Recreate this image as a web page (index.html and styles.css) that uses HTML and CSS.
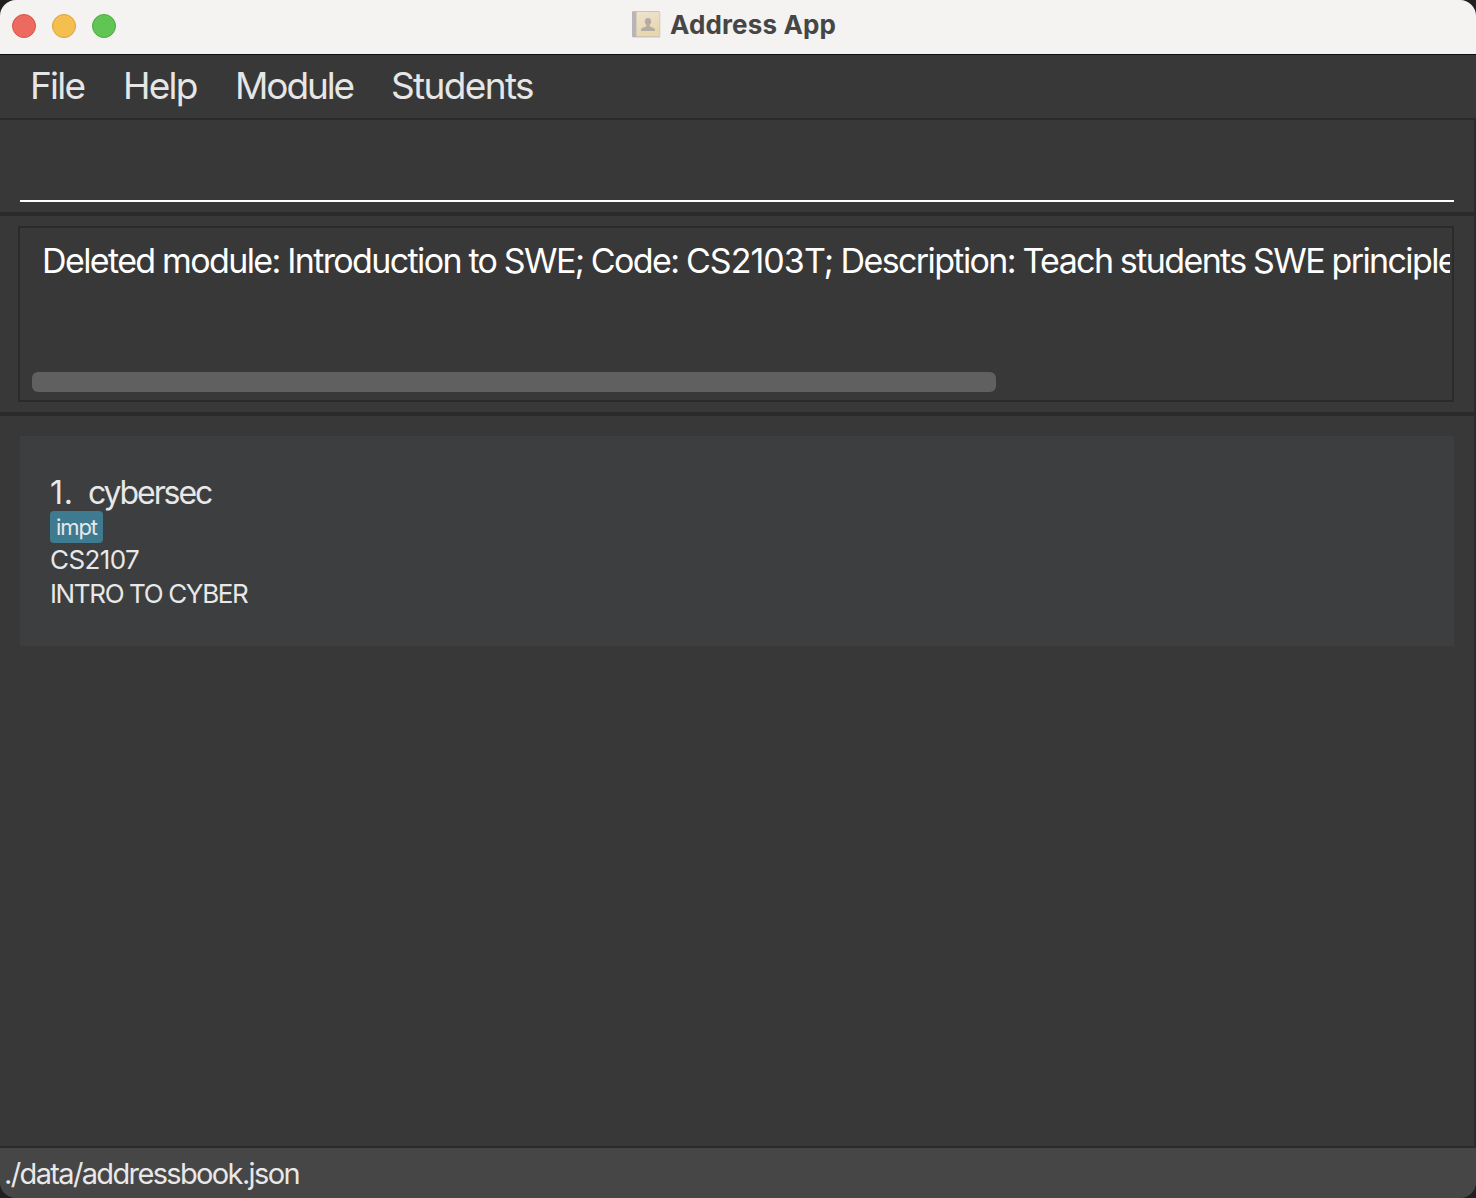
FILE: index.html
```html
<!DOCTYPE html>
<html lang="en">
<head>
<meta charset="utf-8">
<title>Address App</title>
<link rel="stylesheet" href="styles.css">
</head>
<body>
<div class="window">
  <header class="titlebar">
    <div class="lights"><i class="light close"></i><i class="light minimize"></i><i class="light expand"></i></div>
    <div class="title">
      <svg class="book" viewBox="0 0 30 28" width="30" height="28">
        <defs>
          <linearGradient id="cover" x1="0" y1="0" x2="0.3" y2="1"><stop offset="0" stop-color="#eee3cf"/><stop offset="1" stop-color="#ead6ae"/></linearGradient>
        </defs>
        <rect x="1.5" y="2" width="28" height="26" rx="1" fill="#dedbd7"/>
        <rect x="1" y="1" width="28" height="26" rx="1.2" fill="#cfc5b4"/>
        <rect x="5.5" y="2" width="23" height="24" fill="url(#cover)"/>
        <rect x="1" y="1.500" width="4.5" height="25.5" rx="1" fill="#bab5b5"/>
        <rect x="5" y="2" width="1" height="24" fill="#d6ccc0"/>
        <path d="M17 8c-2 0-3.200 1.300-3.200 3.300 0 1.600.7 2.800 1.600 3.500v1.400c-1 .9-4.600 1.300-5.300 3-.2.600-.2 1.300-.1 1.700h14c.1-.4.1-1.100-.1-1.700-.7-1.700-4.300-2.100-5.300-3v-1.400c.9-.7 1.600-1.900 1.600-3.500C20.200 9.300 19 8 17 8z" fill="#b2aca1"/>
      </svg>
      <span>Address App</span>
    </div>
  </header>
  <nav class="menubar">
    <span class="menu-file">File</span><span class="menu-help">Help</span><span class="menu-module">Module</span><span class="menu-students">Students</span>
  </nav>
  <main class="content">
    <section class="command"><div class="command-input"></div></section>
    <section class="result">
      <div class="result-box">
        <div class="result-text">Deleted module: Introduction to SWE; Code: <span class="module-code">CS2103T;</span> Description: Teach students SWE principle</div>
        <div class="scrollbar"></div>
      </div>
    </section>
    <section class="list">
      <article class="card">
        <div class="name"><span>1.</span><span class="name-text">cybersec</span></div>
        <div class="tag">impt</div>
        <div class="code">CS2107</div>
        <div class="desc">INTRO TO CYBER</div>
      </article>
    </section>
  </main>
  <footer class="status">./data/addressbook.json</footer>
</div>
</body>
</html>
```
FILE: styles.css
```css
* { box-sizing: border-box; }
body { margin: 0; background: #201f22; font-family: Inter, "Liberation Sans", sans-serif; }
.window { width: 1476px; height: 1198px; display: flex; flex-direction: column; background: #383838; border-radius: 16px; overflow: hidden; }
.titlebar { height: 55px; background: #f4f3f1; border-bottom: 1px solid #0e0e10; display: grid; grid-template-columns: 1fr auto 1fr; }
.lights { display: flex; gap: 16px; padding: 14px 0 0 12px; }
.light { width: 24px; height: 24px; border-radius: 50%; border: 1px solid; }
.close { background: #ed6a5f; border-color: #d65548; }
.minimize { background: #f5bf4f; border-color: #d9a13c; }
.expand { background: #61c555; border-color: #4dab40; }
.title { display: flex; align-items: flex-start; gap: 9px; height: 54px; color: #464646; font-size: 26px; font-weight: 700; line-height: 30px; letter-spacing: .15px; padding: 10px 9px 0 0; white-space: nowrap; }
.menubar { height: 65px; border-bottom: 2px solid #2a2a2a; display: flex; padding-left: 30px; color: #e6e6e6; font-size: 37px; font-weight: 400; line-height: 62px; letter-spacing: -1.75px; white-space: nowrap; }
.menu-file { width: 93px; }
.menu-help { width: 112px; }
.menu-module { width: 156px; letter-spacing: -2.1px; }
.menu-students { letter-spacing: -1.65px; }
.content { flex: 1; border-right: 2px solid #2b2b2b; }
.command { height: 96px; border-bottom: 4px solid #2a2a2a; padding: 30px 20px 0; }
.command-input { height: 52px; border-bottom: 2px solid #fff; }
.result { height: 200px; border-bottom: 4px solid #2a2a2a; padding: 10px 18px 0 18px; }
.result-box { width: 1436px; height: 176px; border: 2px solid #2a2a2a; padding: 10px 2px 0 12px; }
.result-text { height: 134px; padding-left: 10px; overflow: hidden; color: #fff; font-size: 34px; font-weight: 400; line-height: 46px; letter-spacing: -1.61px; word-spacing: -.5px; white-space: nowrap; }
.module-code { letter-spacing: -.95px; }
.scrollbar { width: 964px; height: 20px; border-radius: 6px; background: #606060; }
.list { padding: 20px 20px 0; }
.card { height: 210px; background: #3c3e3f; padding: 38px 30px 0; color: #e8e8e8; font-weight: 400; white-space: nowrap; }
.name { display: flex; height: 37px; font-size: 32px; line-height: 37px; letter-spacing: .7px; }
.name > span:first-child { width: 38px; }
.name-text { letter-spacing: -2.1px; }
.tag { width: 53px; height: 32px; border-radius: 4px; background: #3e7b91; padding-left: 6px; font-size: 22px; line-height: 32px; letter-spacing: -1.1px; }
.code, .desc { height: 34px; font-size: 26px; line-height: 34px; letter-spacing: -.6px; }
.desc { letter-spacing: -1.36px; }
.status { height: 52px; border-top: 2px solid #2b2b2b; background: #464646; color: #e8e8e8; padding-left: 4px; font-size: 29px; font-weight: 400; line-height: 52px; letter-spacing: -1.64px; }
```
